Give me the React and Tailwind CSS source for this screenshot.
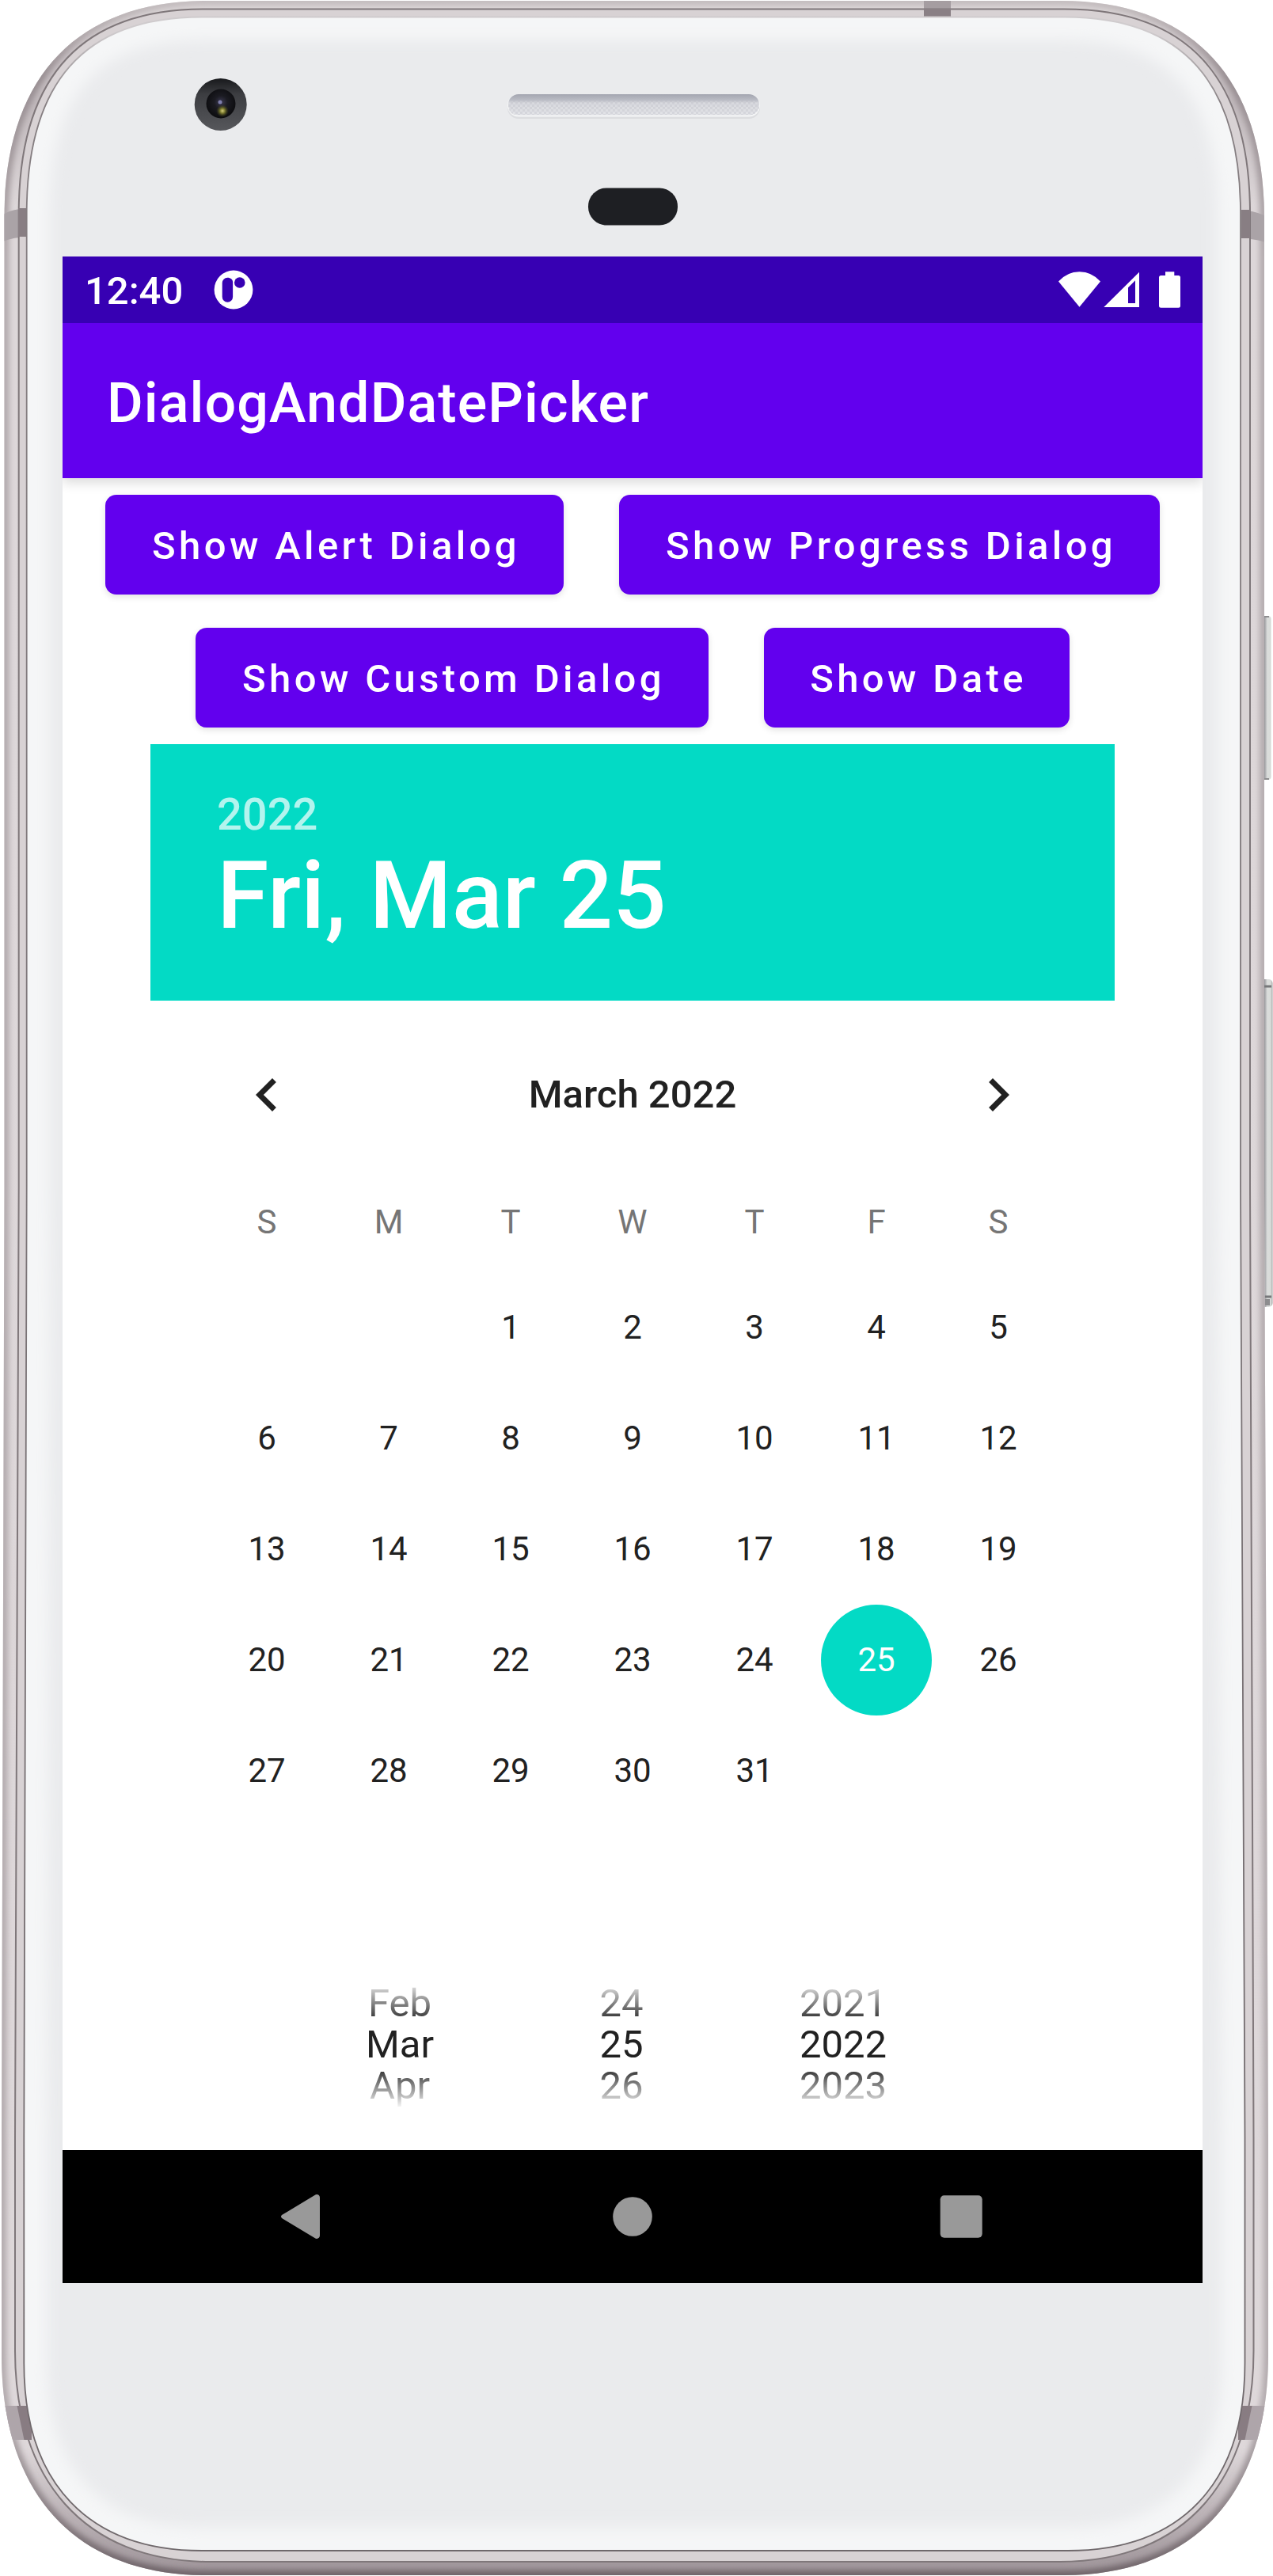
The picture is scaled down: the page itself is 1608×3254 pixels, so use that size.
import React from "react";

const BODY =
  "M262 1 H1340 C1507 1 1597 100 1597 275 V1500 L1602 2700 V2975 C1602 3155 1504 3253 1344 3253 H260 C100 3253 2 3155 2 2975 V2700 L5.5 1500 V275 C5.5 100 95 1 262 1 Z";
const RIDGE =
  "M258 11.5 H1344 C1502 11.5 1579 100 1579 270 V1500 L1583.5 2700 V2970 C1583.5 3130 1499 3236 1339 3236 H265 C105 3236 19 3130 19 2970 V2700 L23.7 1500 V270 C23.7 100 100 11.5 258 11.5 Z";
const GLASS =
  "M255 21.5 H1345 C1495 21.5 1567 105 1567 270 V1500 L1572.5 2700 V2985 C1572.5 3138 1491 3222 1349 3222 H255 C113 3222 30.3 3138 30.3 2985 V2700 L33.7 1500 V270 C33.7 105 105 21.5 255 21.5 Z";

const BUTTON_ROWS = [
  [
    { label: "Show Alert Dialog", width: "w-[579px]" },
    { label: "Show Progress Dialog", width: "w-[683px]" },
  ],
  [
    { label: "Show Custom Dialog", width: "w-[648px]" },
    { label: "Show Date", width: "w-[386px]" },
  ],
];

const WEEKDAYS = ["S", "M", "T", "W", "T", "F", "S"];
const DAYS = [null, null, ...Array.from({ length: 31 }, (_, i) => i + 1)];

const WHEELS = [
  ["Feb", "Mar", "Apr"],
  ["24", "25", "26"],
  ["2021", "2022", "2023"],
];

function PhoneFrame() {
  return (
    <svg
      className="absolute inset-0"
      width="1608"
      height="3254"
      viewBox="0 0 1608 3254"
      fill="none"
      aria-hidden="true"
    >
      <defs>
        <linearGradient id="metal" x1="0" y1="0" x2="0" y2="3254" gradientUnits="userSpaceOnUse">
          <stop offset="0" stopColor="#e0dbdc" />
          <stop offset="0.02" stopColor="#cbc4c7" />
          <stop offset="0.04" stopColor="#c0b8bb" />
          <stop offset="0.08" stopColor="#ddd7d9" />
          <stop offset="0.95" stopColor="#ded8da" />
          <stop offset="0.975" stopColor="#bdb4b8" />
          <stop offset="1" stopColor="#9c9297" />
        </linearGradient>
        <linearGradient id="edge" x1="0" y1="0" x2="0" y2="3254" gradientUnits="userSpaceOnUse">
          <stop offset="0" stopColor="#c4bdbf" />
          <stop offset="0.03" stopColor="#978d91" />
          <stop offset="0.1" stopColor="#b3abae" />
          <stop offset="0.94" stopColor="#b3abae" />
          <stop offset="1" stopColor="#6e6368" />
        </linearGradient>
        <linearGradient id="glass-line" x1="0" y1="0" x2="0" y2="3254" gradientUnits="userSpaceOnUse">
          <stop offset="0" stopColor="#cfcbcd" />
          <stop offset="0.012" stopColor="#cfcbcd" />
          <stop offset="0.04" stopColor="#857e81" />
          <stop offset="1" stopColor="#6f686b" />
        </linearGradient>
        <linearGradient id="button" x1="1597" x2="1608" y1="0" y2="0" gradientUnits="userSpaceOnUse">
          <stop offset="0" stopColor="#96969a" />
          <stop offset="0.35" stopColor="#dcdedd" />
          <stop offset="0.75" stopColor="#d7dad7" />
          <stop offset="1" stopColor="#999a9a" />
        </linearGradient>
        <linearGradient id="speaker" x1="0" y1="119" x2="0" y2="147" gradientUnits="userSpaceOnUse">
          <stop offset="0" stopColor="#a3a5b0" />
          <stop offset="0.25" stopColor="#b8bac3" />
          <stop offset="0.4" stopColor="#d8d9de" />
          <stop offset="1" stopColor="#e3e4e8" />
        </linearGradient>
        <linearGradient id="ring" x1="0" y1="99" x2="0" y2="165" gradientUnits="userSpaceOnUse">
          <stop offset="0" stopColor="#18191c" />
          <stop offset="0.3" stopColor="#3c3d41" />
          <stop offset="1" stopColor="#56575b" />
        </linearGradient>
        <radialGradient id="lens" cx="0.5" cy="0.45" r="0.5">
          <stop offset="0" stopColor="#3a3850" />
          <stop offset="0.45" stopColor="#1b1b22" />
          <stop offset="1" stopColor="#0e0e11" />
        </radialGradient>
        <radialGradient id="glint">
          <stop offset="0" stopColor="#d6cf7c" />
          <stop offset="0.4" stopColor="#77762c" />
          <stop offset="1" stopColor="#35371a" stopOpacity="0" />
        </radialGradient>
        <pattern id="mesh" width="6" height="6" patternUnits="userSpaceOnUse">
          <path d="M0 0h3v3h-3zM3 3h3v3h-3z" fill="#b9bbc5" fillOpacity="0.3" />
        </pattern>
        <clipPath id="body-clip">
          <path d={BODY} />
        </clipPath>
        <clipPath id="glass-clip">
          <path d={GLASS} />
        </clipPath>
        <filter id="rim-blur" x="-2%" y="-2%" width="104%" height="104%">
          <feGaussianBlur stdDeviation="3.5" />
        </filter>
        <filter id="glass-blur" x="-2%" y="-2%" width="104%" height="104%">
          <feGaussianBlur stdDeviation="9" />
        </filter>
      </defs>

      {/* side keys */}
      <rect x="1590" y="778" width="15.5" height="207" rx="4" fill="url(#button)" />
      <path d="M1597 779h6M1597 984h6" stroke="#8d8d8f" strokeWidth="2" />
      <rect x="1590" y="1237" width="17.5" height="414" rx="5" fill="url(#button)" />
      <path d="M1597 1246h9M1597 1638h9" stroke="#77787a" strokeWidth="3" />
      <path d="M1597 1645h7" stroke="#8d8d8f" strokeWidth="8" />

      {/* metal rim */}
      <path d={BODY} fill="url(#metal)" />
      <g clipPath="url(#body-clip)">
        <path d={BODY} stroke="url(#edge)" strokeWidth="12" filter="url(#rim-blur)" />
        <path d="M0 274 Q10 264 36 263 V299 Q12 300 0 307Z" fill="#aaa3a7" />
        <path d="M1608 278 Q1590 266 1564 265 V301 Q1590 301 1608 310Z" fill="#aaa3a7" />
        <path d="M0 3039h60v43H0zM1540 3039h68v43h-68z" fill="#aea5aa" />
        <path d="M1167 0h34v24h-34z" fill="#a59da1" />
      </g>
      <path d={RIDGE} fill="#d8d2d4" stroke="#7f777a" strokeWidth="2" />
      <path d="M23 263h12v36H23zM1568 265h11v36h-11z" fill="#887e83" />
      <path d="M1167 11h34v12h-34z" fill="#8a8085" />
      <path d="M21.5 3039H40V3082H30.5ZM1581.5 3039H1564V3082H1572.5Z" fill="#887c82" />

      {/* front glass */}
      <path d={GLASS} fill="#eaebed" />
      <g clipPath="url(#glass-clip)">
        <path d={GLASS} stroke="#f5f6f7" strokeWidth="58" filter="url(#glass-blur)" />
      </g>
      <path d={GLASS} stroke="url(#glass-line)" strokeWidth="1.8" />

      {/* camera */}
      <circle cx="278.7" cy="132" r="33" fill="url(#ring)" />
      <circle cx="279" cy="131" r="18.5" fill="url(#lens)" />
      <circle cx="281" cy="140" r="8" fill="url(#glint)" />
      <circle cx="278" cy="129" r="2.5" fill="#7f7fae" />

      {/* earpiece and sensor */}
      <rect x="641" y="121" width="319" height="29" rx="14" fill="#dcdde0" />
      <rect x="641" y="119" width="319" height="28.5" rx="14" fill="#f4f5f6" />
      <rect x="642" y="119" width="317" height="26.5" rx="13" fill="url(#speaker)" />
      <rect x="642" y="126" width="317" height="19" rx="9" fill="url(#mesh)" />
      <rect x="743" y="237.5" width="113" height="47" rx="23" fill="#1e1f23" />
    </svg>
  );
}

function StatusBar() {
  return (
    <div className="flex h-[84px] shrink-0 items-center bg-[#3700b3] pl-[28px] text-white">
      <span className="pt-[4px] text-[49px] leading-[60px] font-medium">12:40</span>
      <svg className="ml-[39px]" width="50" height="50" viewBox="0 0 50 50" aria-hidden="true">
        <circle cx="25" cy="25" r="24.4" fill="#fff" />
        <path
          d="M10.7 16.3a6.6 6.6 0 0 1 6.6-6.6c4 0 6.8 2.4 6.8 5.6V34a6.6 6.6 0 0 1-13.4 0z"
          fill="#3700b3"
        />
        <circle cx="32.8" cy="16" r="6.8" fill="#3700b3" />
      </svg>
      <svg
        className="mr-[28px] ml-auto"
        width="154"
        height="46"
        viewBox="1337 343 154 46"
        fill="#fff"
        aria-hidden="true"
      >
        <path d="M1337 355.6Q1348 343.3 1363.5 343.3T1390 355.6L1363.5 387.8Z" />
        <path
          fillRule="evenodd"
          d="M1439 343.7V388H1394.3ZM1434 354.3L1425 363.3V383H1434Z"
        />
        <path d="M1472 343.3h11.3v4.7h5.2a2.5 2.5 0 0 1 2.5 2.5v35.7a2.5 2.5 0 0 1-2.5 2.5h-22a2.5 2.5 0 0 1-2.5-2.5v-35.7a2.5 2.5 0 0 1 2.5-2.5h5.5z" />
      </svg>
    </div>
  );
}

function Calendar() {
  return (
    <div className="px-[70px] text-center text-[42px] text-[#212121]">
      <div className="flex h-[238px] items-center justify-between px-[35px]">
        <svg width="84" height="84" viewBox="0 0 24 24" fill="currentColor" aria-hidden="true">
          <path d="M15.41 7.41L14 6l-6 6 6 6 1.41-1.41L10.83 12z" />
        </svg>
        <span className="text-[49px] leading-[58px] font-medium">March 2022</span>
        <svg width="84" height="84" viewBox="0 0 24 24" fill="currentColor" aria-hidden="true">
          <path d="M10 6L8.59 7.41 13.17 12l-4.58 4.59L10 18l6-6z" />
        </svg>
      </div>
      <div className="grid h-[84px] grid-cols-7 text-[#757575]">
        {WEEKDAYS.map((day, i) => (
          <span key={i} className="leading-[84px]">
            {day}
          </span>
        ))}
      </div>
      <div className="mt-[21px] grid grid-cols-7">
        {DAYS.map((day, i) => (
          <span key={i} className="flex h-[140px] items-center justify-center leading-[50px]">
            {day === 25 ? (
              <span className="flex size-[140px] items-center justify-center rounded-full bg-[#03dac5] text-white">
                25
              </span>
            ) : (
              day
            )}
          </span>
        ))}
      </div>
    </div>
  );
}

export default function App() {
  return (
    <div className="relative h-[3254px] w-[1608px] overflow-hidden bg-white pt-[324px] pl-[79px] font-['Roboto',sans-serif]">
      <PhoneFrame />
      <main className="relative flex h-[2560px] w-[1440px] flex-col bg-white">
        <StatusBar />
        <header className="flex h-[196px] shrink-0 items-center bg-[#6200ee] pt-[5px] pl-[56px] shadow-[0_6px_14px_rgba(0,0,0,0.14)] [clip-path:inset(0_0_-30px_0)]">
          <h1 className="text-[70px] leading-[82px] font-medium tracking-[1.1px] text-white">
            DialogAndDatePicker
          </h1>
        </header>

        <section className="mt-[21px] flex flex-col gap-[42px]">
          {BUTTON_ROWS.map((row, i) => (
            <div key={i} className="flex justify-center gap-[70px]">
              {row.map(({ label, width }) => (
                <button
                  key={label}
                  className={`${width} h-[126px] rounded-[14px] bg-[#6200ee] pt-[4px] pl-[4px] text-[49px] leading-[58px] font-medium tracking-[4.375px] whitespace-nowrap text-white shadow-[0_3px_8px_rgba(0,0,0,0.12)]`}
                >
                  {label}
                </button>
              ))}
            </div>
          ))}
        </section>

        <section className="mt-[21px] ml-[111px] w-[1218px]">
          <div className="h-[324px] bg-[#03dac5] pt-[56px] pl-[84px] font-medium text-white">
            <div className="text-[56px] leading-[66px] text-white/70">2022</div>
            <div className="text-[119px] leading-[139px]">Fri, Mar 25</div>
          </div>
          <Calendar />
        </section>

        <section className="mt-[193px] ml-[286px] flex h-[164px] w-[840px] pt-[5px] text-center text-[49px] leading-[52px] text-[#212121] [mask-image:linear-gradient(to_bottom,transparent,black_55px,black_110px,transparent)]">
          {WHEELS.map((values) => (
            <div key={values[0]} className="flex w-[280px] flex-col">
              {values.map((value) => (
                <span key={value}>{value}</span>
              ))}
            </div>
          ))}
        </section>

        <nav className="mt-auto flex h-[168px] shrink-0 items-center justify-center bg-black">
          <svg width="888" height="60" viewBox="355 2770 888 60" fill="#999" aria-hidden="true">
            <path d="M356.8 2797.6L397.5 2773c2.8-2 6.5-.4 6.5 3v48c0 3.4-3.7 5-6.5 3L356.8 2802.4c-2.4-1.6-2.4-3.2 0-4.8z" />
            <circle cx="799" cy="2800" r="24.8" />
            <rect x="1187.7" y="2773.3" width="53" height="53.4" rx="5" />
          </svg>
        </nav>
      </main>
    </div>
  );
}
